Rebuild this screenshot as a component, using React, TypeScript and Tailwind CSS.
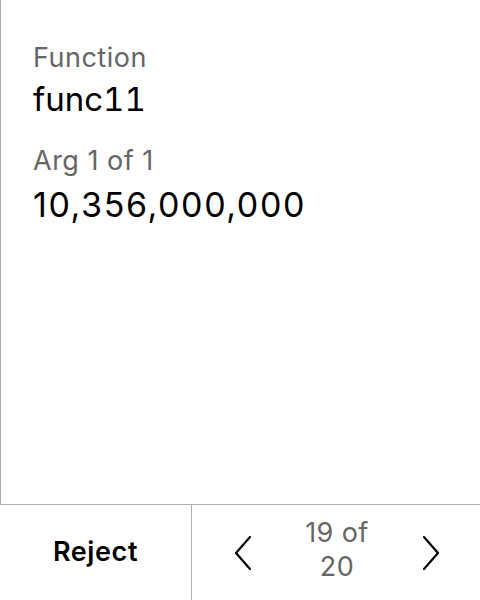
import React from "react";

const Chevron = ({ dir }: { dir: "left" | "right" }) => (
  <svg width="22" height="36" viewBox="0 0 22 36" fill="none" stroke="#000" strokeWidth="2.2" strokeLinecap="round" strokeLinejoin="round">
    {dir === "left" ? <path d="M18 2 L4 18 L18 34" /> : <path d="M4 2 L18 18 L4 34" />}
  </svg>
);

const App = () => {
  return (
    <div className="h-[600px] w-[480px] flex flex-col bg-white text-black" style={{ fontFamily: "Inter, 'Noto Sans', sans-serif" }}>
      <div className="flex-1 border-l border-[#a8a8a8] px-8 pt-[42px]">
        <div className="text-[27px] leading-[32px] tracking-[0.5px] text-[#666666]">Function</div>
        <div className="text-[33px] leading-[38px] tabular-nums mt-[6px]">func11</div>
        <div className="text-[27px] leading-[32px] tracking-[0.5px] text-[#666666] mt-[27px]">Arg 1 of 1</div>
        <div className="text-[34px] leading-[40px] tracking-[1.6px] mt-[8px]">10,356,000,000</div>
      </div>
      <div className="h-24 border-t border-[#b0b0b0] flex">
        <div className="w-[192px] border-r border-[#b0b0b0] flex items-center justify-center">
          <span className="text-[27px] font-semibold tracking-[0.6px]">Reject</span>
        </div>
        <div className="flex-1 flex items-center justify-between pl-[40px] pr-[38px]">
          <Chevron dir="left" />
          <div className="text-[27px] leading-[34px] tracking-[0.4px] text-[#666666] text-center pb-[6px]">
            19 of
            <br />
            20
          </div>
          <Chevron dir="right" />
        </div>
      </div>
    </div>
  );
};

export default App;
